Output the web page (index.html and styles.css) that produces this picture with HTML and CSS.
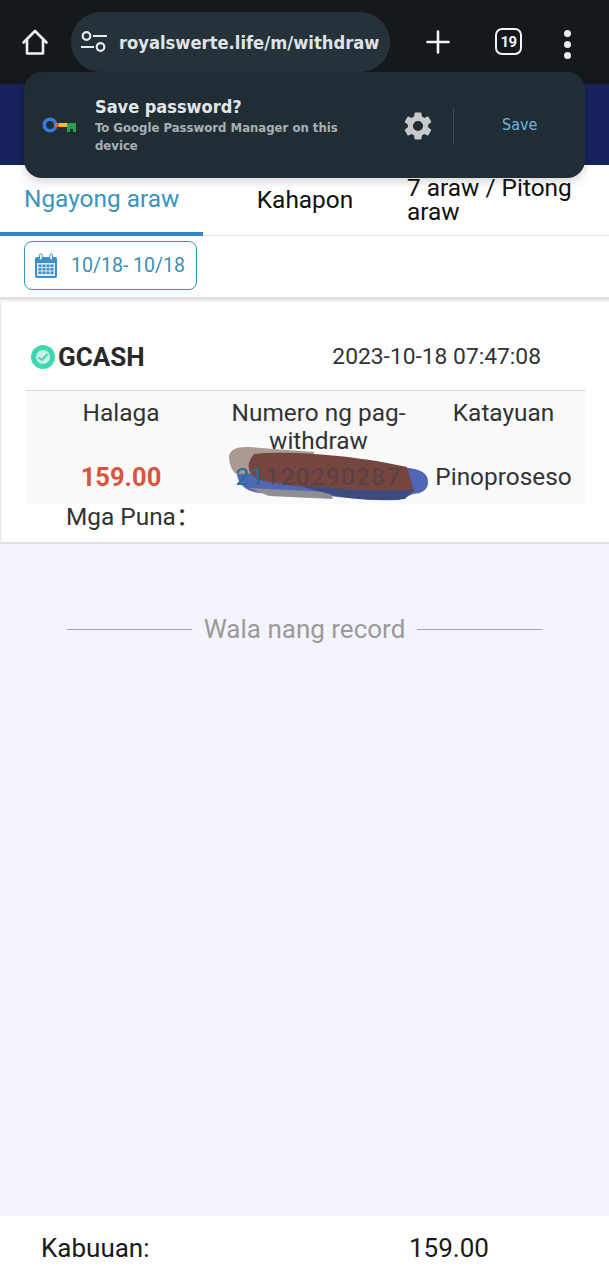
FILE: index.html
```html
<!DOCTYPE html>
<html lang="tl">
<head>
<meta charset="utf-8">
<title>Withdraw records</title>
<link rel="stylesheet" href="styles.css">
</head>
<body>
<div class="page">
  <header class="chrome">
    <svg class="home" viewBox="0 0 28 28" width="28" height="28"><path d="M2.500 14.500 14 3l11.500 11.500M6 11.500V25.500h16V11.500" fill="none" stroke="#f1f3f3" stroke-width="2.600" stroke-linejoin="round" stroke-linecap="round"/></svg>
    <div class="omnibox">
      <svg viewBox="0 0 28 24" width="28" height="24"><g fill="none" stroke="#e6eaec" stroke-width="2.200"><circle cx="6.500" cy="6" r="3.800"/><circle cx="20.500" cy="17" r="3.800"/><path d="M13 6h14M1 17h13"/></g></svg>
      <span class="url">royalswerte.life/m/withdraw</span>
    </div>
    <svg class="plus" viewBox="0 0 24 24" width="24" height="24"><path d="M12 1.500v21M1.500 12h21" stroke="#f1f3f3" stroke-width="2.600" stroke-linecap="round"/></svg>
    <div class="tabcount">19</div>
    <div class="dots"><i></i><i></i><i></i></div>
  </header>
  <div class="appbar"></div>

  <aside class="prompt">
    <svg class="key" viewBox="0 0 34 16" width="34" height="16">
      <circle cx="8" cy="8" r="5.800" fill="none" stroke="#3b78e0" stroke-width="3.600"/>
      <rect x="13" y="6" width="4" height="4" fill="#ea5a45"/>
      <rect x="17" y="6" width="8" height="4" fill="#f1bd2c"/>
      <path d="M25 6h9v9h-3v-3h-3v3h-3z" fill="#2f9e4c"/>
    </svg>
    <div class="prompt-text">
      <div class="prompt-title">Save password?</div>
      <div class="prompt-sub">To Google Password Manager on this device</div>
    </div>
    <svg class="gear" viewBox="0 0 24 24" width="34" height="34"><path fill="#c6cacc" d="M19.140 12.940c.04-.3.060-.61.060-.94s-.02-.64-.07-.94l2.030-1.580a.49.490 0 0 0 .12-.61l-1.920-3.320a.49.490 0 0 0-.59-.22l-2.390.96a7 7 0 0 0-1.620-.94l-.36-2.540a.48.480 0 0 0-.48-.41h-3.840a.48.480 0 0 0-.47.41l-.36 2.540a7.300 7.300 0 0 0-1.620.94l-2.390-.96a.48.480 0 0 0-.59.22L2.740 8.870a.48.480 0 0 0 .12.61l2.030 1.580c-.05.3-.09.63-.09.94s.02.640.07.940l-2.030 1.580a.49.490 0 0 0-.12.610l1.920 3.320c.12.220.37.290.59.220l2.390-.96c.5.380 1.030.7 1.620.94l.36 2.540c.05.240.24.410.48.410h3.840c.24 0 .44-.17.47-.41l.36-2.540a7 7 0 0 0 1.620-.94l2.390.96c.22.080.47 0 .59-.22l1.920-3.320a.48.480 0 0 0-.12-.61zM12 15.600A3.600 3.600 0 1 1 12 8.400a3.600 3.600 0 0 1 0 7.200z"/></svg>
    <div class="prompt-divider"></div>
    <div class="prompt-save">Save</div>
  </aside>

  <nav class="tabs">
    <div class="tab tab-active">Ngayong araw</div>
    <div class="tab tab-center">Kahapon</div>
    <div class="tab tab-wrap">7 araw / Pitong araw</div>
  </nav>

  <section class="filter">
    <div class="date-btn">
      <svg viewBox="0 0 24 26" width="24" height="26">
        <rect x="1" y="4" width="22" height="21" rx="2" fill="#3a8fd0"/>
        <rect x="3" y="10" width="18" height="13" fill="#dcecf7"/>
        <g fill="#3a8fd0"><rect x="4.500" y="11.500" width="3" height="2.500"/><rect x="8.500" y="11.500" width="3" height="2.500"/><rect x="12.500" y="11.500" width="3" height="2.500"/><rect x="16.500" y="11.500" width="3" height="2.500"/><rect x="4.500" y="15" width="3" height="2.500"/><rect x="8.500" y="15" width="3" height="2.500"/><rect x="12.500" y="15" width="3" height="2.500"/><rect x="16.500" y="15" width="3" height="2.500"/><rect x="4.500" y="18.500" width="3" height="2.500"/><rect x="8.500" y="18.500" width="3" height="2.500"/><rect x="12.500" y="18.500" width="3" height="2.500"/><rect x="16.500" y="18.500" width="3" height="2.500"/></g>
        <g fill="#fff" stroke="#3a8fd0" stroke-width="1"><rect x="5.500" y="1" width="2.600" height="6" rx="1.300"/><rect x="15.900" y="1" width="2.600" height="6" rx="1.300"/></g>
      </svg>
      <span>10/18- 10/18</span>
    </div>
  </section>

  <main class="content">
    <article class="card">
      <div class="card-head">
        <div class="brand">
          <svg viewBox="0 0 24 24" width="24" height="24">
            <circle cx="12" cy="12" r="12" fill="#3fd6b4"/>
            <circle cx="12" cy="12" r="7" fill="#c9f2e6"/>
            <path d="M7.500 12.500 11 15l5.500-6" fill="none" stroke="#3fd6b4" stroke-width="2"/>
          </svg>
          <strong>GCASH</strong>
        </div>
        <time>2023-10-18 07:47:08</time>
      </div>
      <div class="grid">
        <div class="cell">Halaga</div>
        <div class="cell">Numero ng pag-withdraw</div>
        <div class="cell">Katayuan</div>
        <div class="cell amount">159.00</div>
        <div class="cell number">
          <svg class="smudge" viewBox="0 0 200 56" width="200" height="56">
            <path d="M0 10Q2 0 20 1L85 6 85 30 12 31Q0 26 0 10Z" fill="#ab9a92"/>
            <path d="M8 28 180 22Q199 24 199 36 199 47 184 48L170 54Q140 55 100 50L30 47Q10 44 8 28Z" fill="#4f67b4"/>
            <path d="M20 42 100 46 104 53 40 50Z" fill="#8f8e94"/>
            <path d="M25 8C60 4 130 10 178 21L185 46Q160 50 130 46 70 42 30 34 12 24 25 8Z" fill="#75463f"/>
            <path d="M70 40C110 42 140 46 185 44L176 53Q140 56 108 50Z" fill="#3e4b80"/>
          </svg>
          <span class="num-text"><b>21</b>120290287</span>
        </div>
        <div class="cell">Pinoproseso</div>
      </div>
      <div class="remark">Mga Puna：</div>
    </article>
    <div class="end-note"><i></i><span>Wala nang record</span><i></i></div>
  </main>

  <footer class="total">
    <span class="total-label">Kabuuan:</span>
    <span class="total-value">159.00</span>
  </footer>
</div>
</body>
</html>
```

FILE: styles.css
```css
* { box-sizing: border-box; }
html, body { margin: 0; padding: 0; }
body { font-family: Roboto, "Liberation Sans", sans-serif; background: #f4f4fd; }
.page { position: relative; width: 609px; height: 1280px; display: flex; flex-direction: column; overflow: hidden; }

.chrome { height: 84px; flex: none; background: #16191c; display: flex; align-items: flex-start; padding: 12px 0 0 21px; }
.home { margin-top: 16px; flex: none; }
.omnibox { width: 319px; height: 60px; margin-left: 22px; flex: none; border-radius: 30px; background: #25323a; display: flex; align-items: center; padding: 0 10px 0 9px; gap: 11px; }
.url { font-family: "DejaVu Sans", sans-serif; font-stretch: condensed; font-weight: 700; font-size: 18.200px; color: #dfe4e7; white-space: nowrap; overflow: hidden; }
.plus { margin: 18px 0 0 36px; flex: none; }
.tabcount { margin: 16px 0 0 45px; width: 27px; height: 27px; flex: none; border: 2.500px solid #f1f3f3; border-radius: 7px; color: #f1f3f3; font-weight: 700; font-size: 15px; letter-spacing: -0.500px; display: flex; align-items: center; justify-content: center; }
.dots { margin: 18px 0 0 42px; display: flex; flex-direction: column; gap: 4px; }
.dots i { display: block; width: 7px; height: 7px; border-radius: 50%; background: #eceeee; }

.appbar { height: 81px; flex: none; background: #17215c; }

.prompt { position: absolute; left: 24px; top: 72px; width: 561px; height: 106px; border-radius: 18px; background: #212d35; box-shadow: 0 4px 10px rgba(0,0,0,.16); display: flex; align-items: center; padding-left: 18px; }
.key { flex: none; }
.prompt-text { width: 262px; margin-left: 19px; flex: none; font-family: "DejaVu Sans", sans-serif; font-stretch: condensed; }
.prompt-title { font-weight: 700; font-size: 18px; line-height: 24px; color: #e4e7e9; }
.prompt-sub { font-weight: 700; font-size: 13px; line-height: 18px; color: #a9b0b5; }
.gear { flex: none; margin-left: 44px; margin-top: 2px; }
.prompt-divider { width: 1px; height: 36px; background: #3d4a52; margin-left: 18px; flex: none; margin-top: 2px; }
.prompt-save { margin-left: 48px; font-family: "DejaVu Sans", sans-serif; font-stretch: condensed; font-size: 16px; color: #6db6d8; margin-top: -2px; }

.tabs { height: 71px; flex: none; background: #fff; display: grid; grid-template-columns: 203px 204px 202px; border-bottom: 1px solid #e6e6e6; font-size: 24.400px; line-height: 24px; color: #111; }
.tab { display: flex; align-items: center; }
.tab-active { color: #3a94bd; padding-left: 24px; border-bottom: 4px solid #2f86c0; height: 71px; padding-top: 1px; }
.tab-center { justify-content: center; padding-bottom: 2px; }
.tab-wrap { align-items: flex-start; margin-top: 11px; }

.filter { height: 64px; flex: none; background: #fff; padding: 5px 0 0 24px; border-bottom: 3px solid #e2e2e2; }
.date-btn { width: 173px; height: 49px; border: 1px solid #3a94bd; border-radius: 8px; display: flex; align-items: center; padding-left: 9px; gap: 13px; color: #3a8fb5; font-size: 19.500px; }

.content { flex: 1; min-height: 0; background: #f4f4fd; display: flex; flex-direction: column; padding-top: 4px; }
.card { height: 242px; background: #fff; border-left: 1px solid #e6e6e6; border-bottom: 2px solid #e2e2e6; padding: 0 24px 0 25px; margin-top: -2px; }
.card-head { height: 89px; border-bottom: 1px solid #d6d6d6; padding: 21px 44px 0 5px; display: flex; align-items: center; justify-content: space-between; }
.brand { display: flex; align-items: center; gap: 3px; }
.brand strong { font-size: 26px; font-weight: 700; color: #2a2a2a; }
time { font-size: 22.800px; color: #333; }
.grid { display: grid; grid-template-columns: 190px 205px 165px; grid-template-rows: 62px 51px; background: #fafafa; font-size: 24.400px; line-height: 28px; color: #333; text-align: center; }
.cell { padding-top: 8px; }
.grid .cell:nth-child(n+4) { padding-top: 9px; line-height: 30px; }
.cell.amount { font-weight: 700; font-size: 25.500px; color: #d9533f; }
.cell.number { position: relative; color: rgba(40,50,90,.35); letter-spacing: 1.400px; }
.smudge { position: absolute; left: 13px; top: -7px; }
.num-text { position: relative; }
.num-text b { font-weight: 400; color: #1f6f96; }
.remark { font-family: Roboto, "Noto Sans CJK SC", sans-serif; font-size: 24.400px; line-height: 26px; color: #333; padding-left: 40px; }
.end-note { display: flex; align-items: center; justify-content: center; gap: 12px; margin-top: 70px; font-size: 26px; line-height: 30px; color: #9a9a9a; }
.end-note i { display: block; width: 125px; height: 1px; background: #a5a5a5; }

.total { height: 64px; flex: none; background: #fff; display: flex; align-items: center; padding-left: 41px; font-size: 26px; color: #1a1a1a; }
.total-label { width: 368px; }
```
